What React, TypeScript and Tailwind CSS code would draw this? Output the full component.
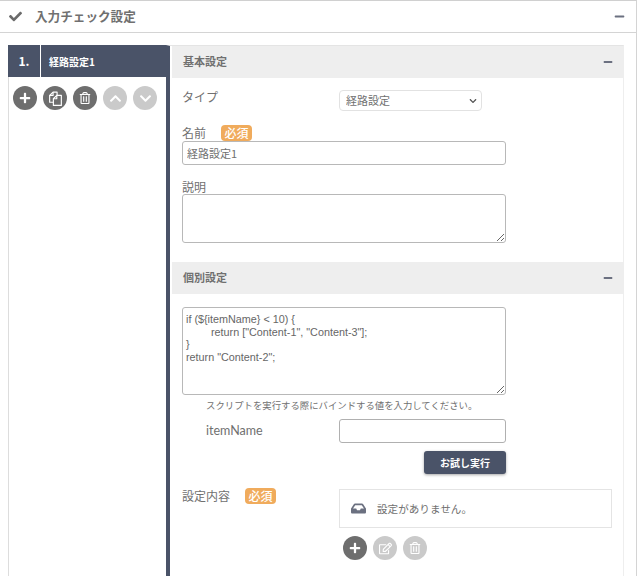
import React from "react";
import { FaCheck, FaMinus, FaPlus, FaChevronUp, FaChevronDown, FaInbox, FaRegEdit, FaRegTrashAlt } from "react-icons/fa";

const Circle = ({ on = true, children }: { on?: boolean; children: React.ReactNode }) => (
  <span className={`flex h-6 w-6 items-center justify-center rounded-full text-white ${on ? "bg-[#6e6e6e]" : "bg-[#cacaca]"}`}>
    {children}
  </span>
);

const Badge = () => (
  <span className="flex h-4 w-[31px] items-center justify-center rounded-sm bg-[#f0ab5c] text-[12px] font-medium leading-none text-white">必須</span>
);

const SectionHead = ({ title }: { title: string }) => (
  <div className="flex h-8 items-center justify-between bg-[#eeeeee] pb-px pl-[11px] pr-[10px]">
    <span className="text-[11px] font-bold text-[#707070]">{title}</span>
    <FaMinus className="h-[10px] w-[10px] text-[#6b7080]" />
  </div>
);

const CopyIcon = () => (
  <svg viewBox="0 0 16 16" className="h-[17px] w-[17px]" fill="none" stroke="currentColor" strokeWidth="1.1" strokeLinejoin="round">
    <path d="M6 11.5H2.5V5.2L5.7 2H9.5V5" />
    <path d="M2.5 5.2H5.7V2" />
    <path d="M6 8.2L9.2 5H13.5V14.5H6Z" />
    <path d="M6 8.2H9.2V5" />
  </svg>
);

export default function App() {
  return (
    <div className="h-[576px] w-[640px] overflow-hidden bg-white font-['Noto_Sans_CJK_JP','Noto_Sans',sans-serif] text-[#707070]">
      <div className="mr-[3px] h-[576px] border-r border-t border-[#d4d4d4] border-t-[#d0d0d0]">
        <div className="flex h-[32px] items-center justify-between border-b border-[#d4d4d4] pl-[9px] pr-[11px]">
          <div className="flex items-center">
            <FaCheck className="h-[13px] w-[13px] text-[#6b6b6b]" />
            <span className="ml-[13px] text-[12.6px] font-bold leading-none text-[#707070]">入力チェック設定</span>
          </div>
          <FaMinus className="h-[11px] w-[11px] text-[#6b7080]" />
        </div>

        <div className="ml-2 mr-3 mt-3 flex h-[540px]">
          <div className="w-[158px] shrink-0 border-l border-[#dddddd]">
            <div className="-ml-px flex h-8 w-[159px] bg-[#4a5368] text-white">
              <span className="flex h-full w-[32px] items-center justify-center text-[12px] font-bold">1.</span>
              <span className="flex h-full flex-1 items-center border-l border-white pl-[8px] text-[10px] font-bold">経路設定1</span>
            </div>
            <div className="flex gap-[6px] pl-1 pt-[9px]">
              <Circle><FaPlus className="h-[12px] w-[12px]" /></Circle>
              <Circle><CopyIcon /></Circle>
              <Circle><FaRegTrashAlt className="h-3 w-3" /></Circle>
              <Circle on={false}><FaChevronUp className="h-[13px] w-[13px]" /></Circle>
              <Circle on={false}><FaChevronDown className="h-[13px] w-[13px]" /></Circle>
            </div>
          </div>

          <div className="w-[458px] border-l-4 border-r border-t border-[#4a5368] border-r-[#eeeeee] border-t-[#e4e4e4] pl-[2px]">
            <SectionHead title="基本設定" />
            <div className="pl-[10px] pr-2 pt-[12px]">
              <div className="flex items-start">
                <span className="mt-px w-[157px] text-[12px] leading-[12px]">タイプ</span>
                <div className="relative h-[21px] w-[143px]">
                  <select defaultValue="経路設定" className="block h-[21px] w-[143px] appearance-none rounded-sm border border-[#e2e2e2] bg-white py-0 pl-[6px] text-[11px] leading-[19px] text-[#707070]">
                    <option>経路設定</option>
                  </select>
                  <FaChevronDown className="absolute right-[5px] top-[7px] h-[8px] w-[8px] text-[#555555]" />
                </div>
              </div>
              <div className="mt-[14px] flex h-[16px] items-center">
                <span className="w-[39px] text-[12px] leading-[12px]">名前</span>
                <Badge />
              </div>
              <input readOnly value="経路設定1" className="block h-6 w-[324px] rounded-[3px] border border-[#b8b8b8] px-[4px] text-[11px] text-[#707070]" />
              <div className="mt-[14px] h-[15px] text-[12px] leading-[15px]">説明</div>
              <textarea readOnly className="block h-[49px] w-[324px] rounded-[3px] border border-[#b8b8b8]" />
            </div>
            <div className="mt-[19px]"><SectionHead title="個別設定" /></div>
            <div className="pl-[10px] pr-2 pt-[13px]">
              <textarea
                readOnly
                value={'if (${itemName} < 10) {\n\treturn ["Content-1", "Content-3"];\n}\nreturn "Content-2";'}
                className="block h-[88px] w-[324px] rounded-[3px] border border-[#b8b8b8] px-[3px] pb-[4px] pt-[5px] font-['Liberation_Sans',sans-serif] text-[10.8px] leading-[12.5px] text-[#666666] [tab-size:25px]"
              />
              <p className="ml-6 mt-[3px] text-[9.4px] leading-[14px]">スクリプトを実行する際にバインドする値を入力してください。</p>
              <div className="mt-[7px] flex items-center">
                <span className="ml-6 w-[133px] font-['Lato',sans-serif] text-[12.5px]">itemName</span>
                <input readOnly className="h-6 w-[167px] rounded-[3px] border border-[#b0b0b0]" />
              </div>
              <div className="mt-2 flex w-[324px] justify-end">
                <button className="h-[23px] w-[82px] rounded-[3px] bg-[#4a5368] text-[10px] font-bold text-white shadow-[0_1px_3px_rgba(0,0,0,0.35)]">お試し実行</button>
              </div>
              <div className="mt-[15px] flex items-start">
                <div className="-mt-px flex w-[157px] items-center">
                  <span className="w-[63px] text-[12px] leading-[16px]">設定内容</span>
                  <Badge />
                </div>
                <div>
                  <div className="flex h-[39px] w-[273px] items-center border border-[#e4e4e4] pl-[11px]">
                    <FaInbox className="h-[15px] w-[15px] text-[#6b7080]" />
                    <span className="ml-[11px] text-[10.6px]">設定がありません。</span>
                  </div>
                  <div className="ml-1 mt-2 flex gap-[6px]">
                    <Circle><FaPlus className="h-[12px] w-[12px]" /></Circle>
                    <Circle on={false}><FaRegEdit className="h-[13px] w-[13px]" /></Circle>
                    <Circle on={false}><FaRegTrashAlt className="h-3 w-3" /></Circle>
                  </div>
                </div>
              </div>
            </div>
          </div>
        </div>
      </div>
    </div>
  );
}
